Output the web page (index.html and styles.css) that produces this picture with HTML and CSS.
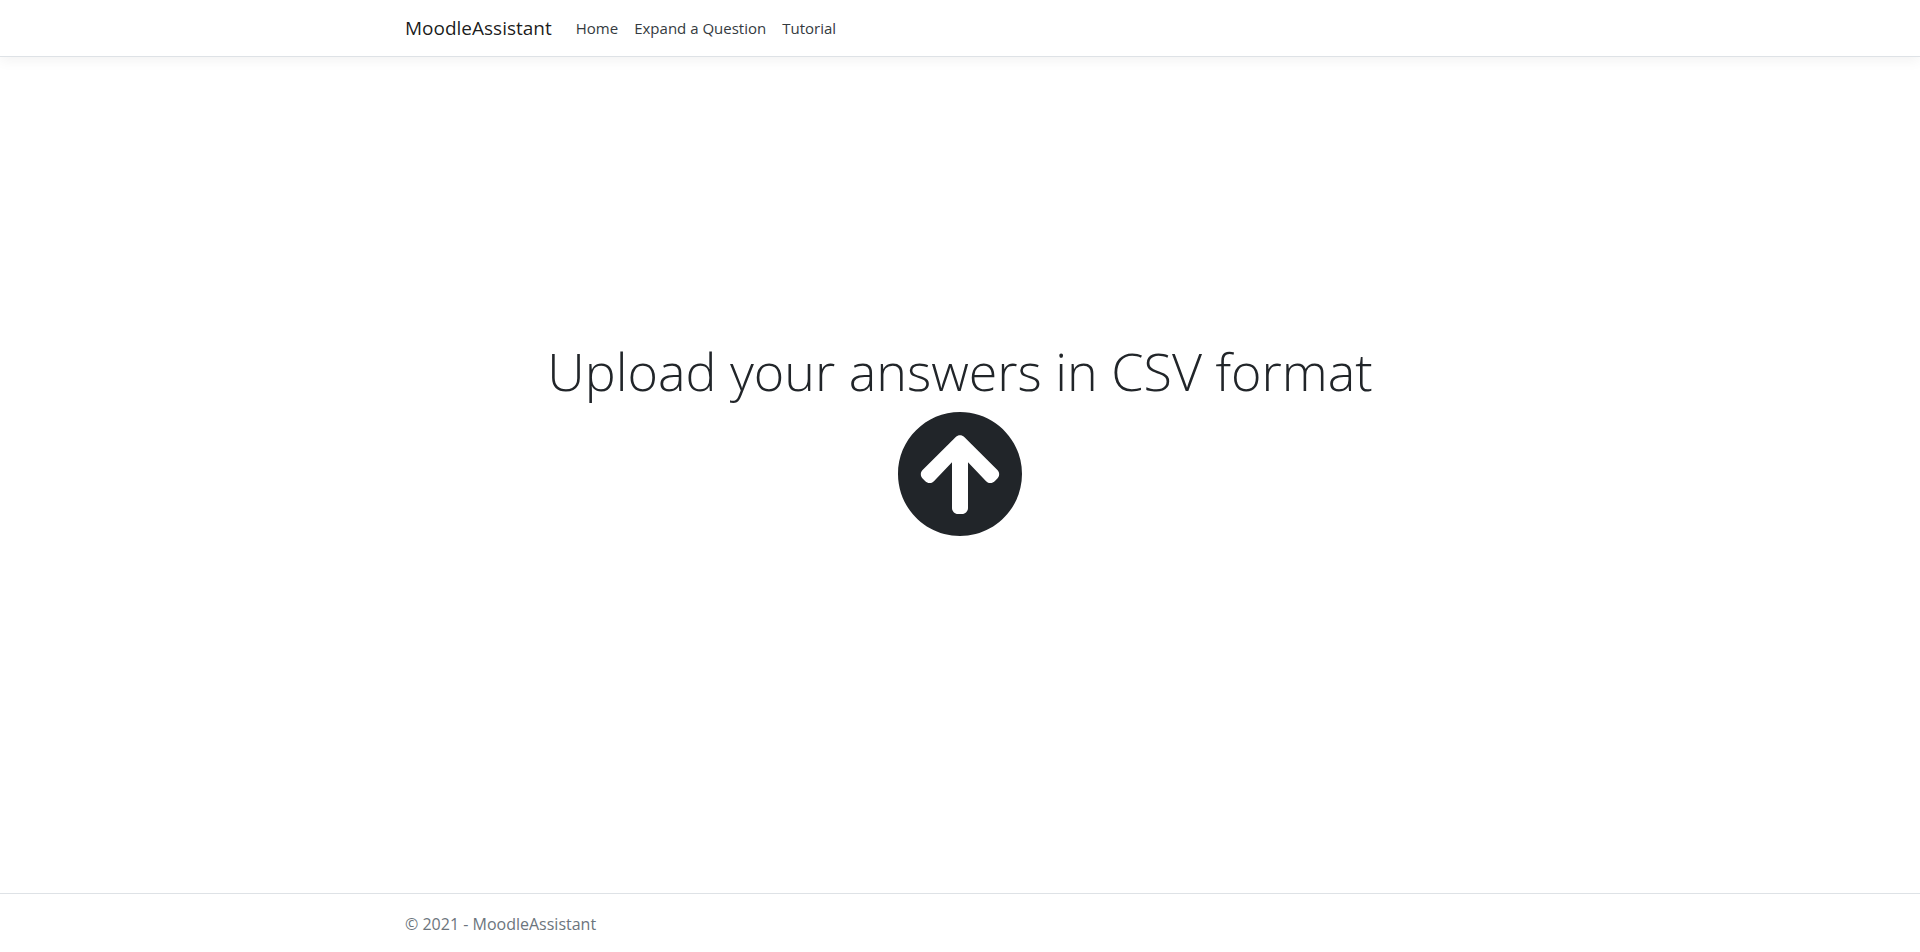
FILE: index.html
```html
<!DOCTYPE html>
<html lang="en">
<head>
  <meta charset="utf-8">
  <meta name="viewport" content="width=device-width, initial-scale=1">
  <title>MoodleAssistant</title>
  <link rel="stylesheet" href="styles.css">
</head>
<body>
  <header class="site-header">
    <nav class="container navbar">
      <a class="brand" href="#">MoodleAssistant</a>
      <a class="nav-link" href="#">Home</a>
      <a class="nav-link" href="#">Expand a Question</a>
      <a class="nav-link" href="#">Tutorial</a>
    </nav>
  </header>
  <main class="upload">
    <h1 class="upload-title">Upload your answers in CSV format</h1>
    <button class="upload-button" type="button" aria-label="Upload CSV file">
      <svg class="upload-icon" viewBox="0 0 512 512" aria-hidden="true"><path fill="currentColor" d="M8 256C8 119 119 8 256 8s248 111 248 248-111 248-248 248S8 393 8 256zm143.600 28.900l72.400-75.500V392c0 13.300 10.700 24 24 24h16c13.300 0 24-10.700 24-24V209.400l72.400 75.500c9.300 9.700 24.800 9.900 34.300.4l10.900-11c9.400-9.400 9.400-24.600 0-33.900L273 107.700c-9.400-9.400-24.600-9.400-33.900 0L106.300 240.400c-9.400 9.400-9.400 24.600 0 33.900l10.900 11c9.600 9.500 25.100 9.300 34.400-.4z"/></svg>
    </button>
  </main>
  <footer class="site-footer">
    <div class="container">© 2021 - MoodleAssistant</div>
  </footer>
</body>
</html>
```
FILE: styles.css
```css
* {
  box-sizing: border-box;
}

body {
  margin: 0;
  min-height: 100vh;
  display: flex;
  flex-direction: column;
  background: #fff;
  color: #212529;
  font-family: "Segoe UI", "Open Sans", "Noto Sans", sans-serif;
  font-size: 16px;
  line-height: 24px;
}

.container {
  width: 100%;
  max-width: 1140px;
  margin: 0 auto;
  padding: 0 15px;
}

.site-header {
  padding: 8px 0;
  border-bottom: 1px solid #dee2e6;
  box-shadow: 0 4px 12px rgba(0, 0, 0, 0.05);
}

.navbar {
  display: flex;
  align-items: center;
}

.brand {
  margin-right: 16px;
  padding: 5px 0;
  color: rgba(0, 0, 0, 0.9);
  font-size: 19px;
  line-height: 30px;
  text-decoration: none;
}

.nav-link {
  padding: 8px;
  color: #343a40;
  font-size: 15px;
  text-decoration: none;
}

.upload {
  flex: 1;
  display: flex;
  flex-direction: column;
  align-items: center;
  justify-content: center;
  padding-bottom: 76px;
  text-align: center;
}

.upload-title {
  margin: 0 0 6px;
  font-size: 52px;
  font-weight: 300;
  line-height: 67px;
}

.upload-button {
  display: block;
  padding: 0;
  border: 0;
  border-radius: 50%;
  background: none;
  color: #212529;
  cursor: pointer;
}

.upload-icon {
  display: block;
  width: 128px;
  height: 128px;
}

.site-footer {
  padding: 18px 0 16px;
  border-top: 1px solid #dee2e6;
  color: #6c757d;
  font-size: 16px;
}
```
